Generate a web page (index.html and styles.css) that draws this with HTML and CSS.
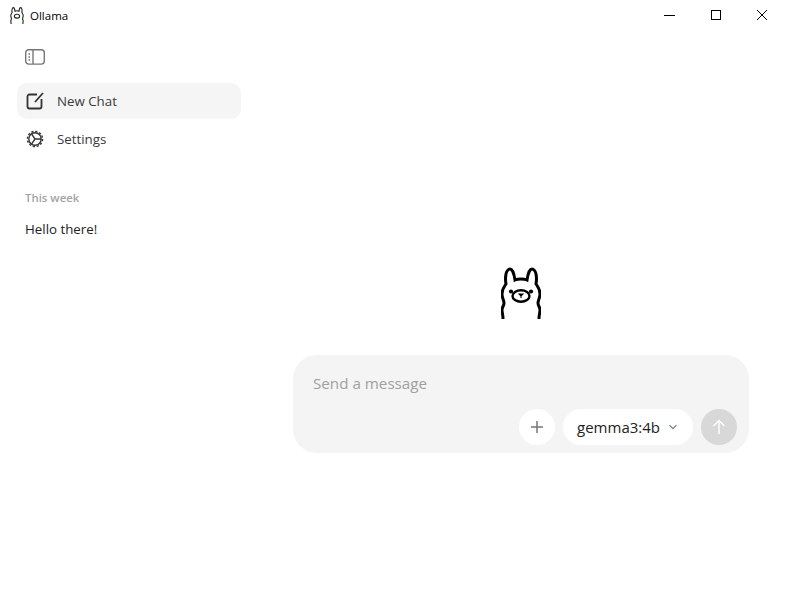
FILE: index.html
```html
<!DOCTYPE html>
<html>
<head>
    <title>Ollama</title>
    <link rel="stylesheet" href="styles.css">
</head>
<body>
    <div class="titlebar">
        <div class="app-name">
            <svg class="app-icon" viewBox="0 0 40 52" fill="none" stroke="#222" stroke-width="3.400">
                <path d="M2 52C2 47 1 46 1 43C1 40 3 39 3 36C3 33 1 31 1 27C1 22 3 20 5 17C4 12 4.500 10 5 7C5.500 4 7.500 2 9 2C11 2 13 6 14 13C17 11.500 23 11.500 26 13C27 6 29 2 31 2C32.500 2 34.500 4 35 7C35.500 10 36 12 35 17C37 20 39 22 39 27C39 31 37 33 37 36C37 39 39 40 39 43C39 46 38 47 38 52"/>
                <ellipse cx="20" cy="28" rx="8" ry="6"/>
            </svg>
            <span>Ollama</span>
        </div>
        <div class="window-controls">
            <div class="win-btn">
                <svg width="12" height="12" viewBox="0 0 12 12" stroke="#000" fill="none"><path d="M0 6.500h11"/></svg>
            </div>
            <div class="win-btn">
                <svg width="12" height="12" viewBox="0 0 12 12" stroke="#000" fill="none"><rect x="1.500" y="1.500" width="9" height="9"/></svg>
            </div>
            <div class="win-btn">
                <svg width="12" height="12" viewBox="0 0 12 12" stroke="#000" fill="none"><path d="M1 1l10 10M11 1L1 11"/></svg>
            </div>
        </div>
    </div>

    <div class="layout">
        <div class="sidebar">
            <svg class="toggle-icon" width="20" height="16" viewBox="0 0 20 16" fill="none" stroke="#777" stroke-width="1.400">
                <rect x="0.700" y="0.700" width="18.600" height="14.400" rx="3"/>
                <path d="M8 1v14"/>
                <path d="M3.500 5h1.500M3.500 8h1.500M3.500 11h1.500"/>
            </svg>
            <div class="nav-item active">
                <svg width="18" height="18" viewBox="0 0 18 18" fill="none" stroke="#333" stroke-width="1.800">
                    <path d="M11 2.500H3.500a2 2 0 0 0-2 2v10a2 2 0 0 0 2 2h10a2 2 0 0 0 2-2V7"/>
                    <path d="M9 10l8-9"/>
                </svg>
                <span>New Chat</span>
            </div>
            <div class="nav-item">
                <svg width="18" height="18" viewBox="0 0 18 18" fill="none" stroke="#333" stroke-width="1.400">
                    <circle cx="9" cy="9" r="6.200"/>
                    <circle cx="9" cy="9" r="7.600" stroke-dasharray="2.200 1.780"/>
                    <path d="M5.500 3.800L9 9l-3.500 5.200M9 9h6"/>
                </svg>
                <span>Settings</span>
            </div>
            <div class="section-label">This week</div>
            <div class="chat-link">Hello there!</div>
        </div>

        <div class="main">
            <svg class="logo" width="40" height="52" viewBox="0 0 40 52" fill="none" stroke="#000" stroke-width="3">
                <path d="M2 52C2 47 1 46 1 43C1 40 3 39 3 36C3 33 1 31 1 27C1 22 3 20 5 17C4 12 4.500 10 5 7C5.500 4 7.500 2 9 2C11 2 13 6 14 13C17 11.500 23 11.500 26 13C27 6 29 2 31 2C32.500 2 34.500 4 35 7C35.500 10 36 12 35 17C37 20 39 22 39 27C39 31 37 33 37 36C37 39 39 40 39 43C39 46 38 47 38 52"/>
                <ellipse cx="20" cy="29" rx="8.500" ry="5.800" stroke-width="2.400"/>
                <circle cx="10" cy="24.500" r="2.100" fill="#000" stroke="none"/>
                <circle cx="30" cy="24.500" r="2.100" fill="#000" stroke="none"/>
                <path d="M18 27h4L20 29zM20 29v2" fill="#000" stroke-width="1.100"/>
            </svg>

            <div class="composer">
                <div class="placeholder">Send a message</div>
                <div class="composer-actions">
                    <div class="round-btn">
                        <svg width="14" height="14" viewBox="0 0 14 14" stroke="#777" stroke-width="1.500" fill="none"><path d="M7 1v12M1 7h12"/></svg>
                    </div>
                    <div class="model-select">
                        <span>gemma3:4b</span>
                        <svg width="10" height="6" viewBox="0 0 10 6" stroke="#777" stroke-width="1.100" fill="none"><path d="M1.500 1.200L5 4.700l3.500-3.500"/></svg>
                    </div>
                    <div class="round-btn send">
                        <svg width="14" height="16" viewBox="0 0 14 16" stroke="#fff" stroke-width="1.400" fill="none"><path d="M7 15V1.500M1.500 7L7 1.500 12.500 7"/></svg>
                    </div>
                </div>
            </div>
        </div>
    </div>
</body>
</html>
```

FILE: styles.css
```css
html, body {
    height: 100%;
}
body {
    margin: 0;
    background-color: white;
    color: #222;
    font-family: "Open Sans", "Noto Sans", sans-serif;
    overflow: hidden;
}
.titlebar {
    display: flex;
    justify-content: space-between;
    height: 30px;
}
.app-name {
    display: flex;
    align-items: center;
    gap: 6px;
    padding-left: 10px;
    font-size: 11.500px;
    color: #000;
}
.app-icon {
    width: 14px;
    height: 17px;
}
.window-controls {
    display: flex;
    padding-right: 1px;
}
.win-btn {
    display: flex;
    align-items: center;
    justify-content: center;
    width: 46px;
    height: 30px;
}
.layout {
    display: flex;
    height: 563px;
}
.sidebar {
    display: flex;
    flex-direction: column;
    width: 224px;
    padding: 19px 15px 0 17px;
}
.toggle-icon {
    margin: 0 0 18px 8px;
}
.nav-item {
    display: flex;
    align-items: center;
    gap: 13px;
    height: 36px;
    margin-bottom: 2px;
    padding-left: 9px;
    border-radius: 10px;
    font-size: 13.300px;
    color: #3a3a3a;
}
.nav-item.active {
    background-color: #f5f5f5;
}
.section-label {
    margin: 30px 0 0 8px;
    font-size: 11.400px;
    font-weight: 600;
    line-height: 18px;
    color: #a3a3a3;
}
.chat-link {
    margin: 12px 0 0 8px;
    font-size: 13.300px;
    line-height: 20px;
    color: #222;
}
.main {
    flex: 1;
    display: flex;
    flex-direction: column;
    align-items: center;
    padding: 237px 37px 0;
}
.logo {
    margin-bottom: 36px;
}
.composer {
    align-self: stretch;
    height: 98px;
    box-sizing: border-box;
    padding: 15px 12px 8px 20px;
    background-color: #f4f4f4;
    border-radius: 24px;
}
.placeholder {
    font-size: 15.200px;
    line-height: 26px;
    color: #a0a0a0;
}
.composer-actions {
    display: flex;
    justify-content: flex-end;
    gap: 8px;
    margin-top: 13px;
}
.round-btn {
    display: flex;
    align-items: center;
    justify-content: center;
    width: 36px;
    height: 36px;
    border-radius: 50%;
    background-color: white;
}
.round-btn.send {
    background-color: #d8d8d8;
}
.model-select {
    display: flex;
    align-items: center;
    gap: 8px;
    height: 36px;
    padding: 0 15px 0 14px;
    border-radius: 18px;
    background-color: white;
    font-size: 15px;
    color: #222;
}
```
